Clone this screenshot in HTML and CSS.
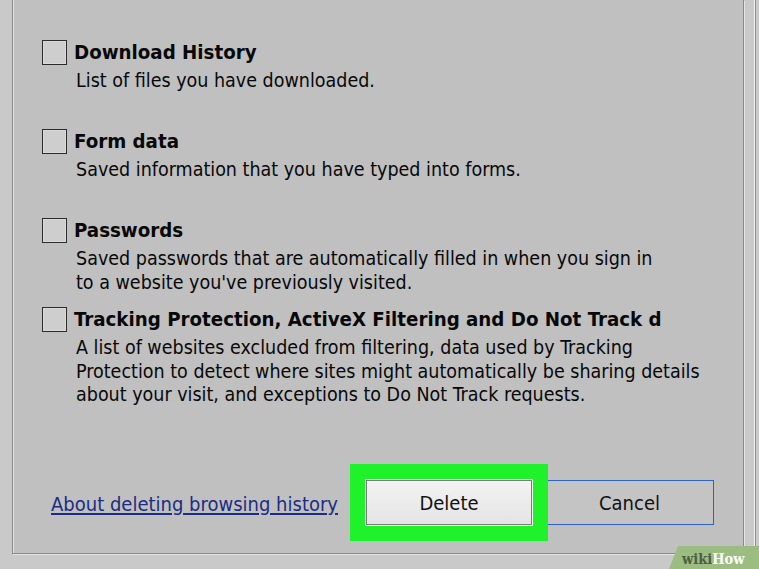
FILE: index.html
```html
<!DOCTYPE html>
<html lang="en">
<head>
<meta charset="utf-8">
<title>Delete Browsing History</title>
<link rel="stylesheet" href="styles.css">
</head>
<body>
<div class="window">
  <div class="frame">
    <div class="panel">
      <div class="options">
        <div class="option">
          <span class="check"></span>
          <div class="option-text">
            <div class="option-title">Download History</div>
            <div class="option-desc">List of files you have downloaded.</div>
          </div>
        </div>
        <div class="option">
          <span class="check"></span>
          <div class="option-text">
            <div class="option-title">Form data</div>
            <div class="option-desc">Saved information that you have typed into forms.</div>
          </div>
        </div>
        <div class="option">
          <span class="check"></span>
          <div class="option-text">
            <div class="option-title">Passwords</div>
            <div class="option-desc">Saved passwords that are automatically filled in when you sign in<br>to a website you've previously visited.</div>
          </div>
        </div>
        <div class="option">
          <span class="check"></span>
          <div class="option-text">
            <div class="option-title">Tracking Protection, ActiveX Filtering and Do Not Track d</div>
            <div class="option-desc">A list of websites excluded from filtering, data used by Tracking<br>Protection to detect where sites might automatically be sharing details<br>about your visit, and exceptions to Do Not Track requests.</div>
          </div>
        </div>
      </div>
      <div class="footer">
        <a class="help-link" href="#">About deleting browsing history</a>
        <div class="highlight"><button class="btn btn-delete" type="button">Delete</button></div>
        <button class="btn btn-cancel" type="button">Cancel</button>
      </div>
    </div>
  </div>
  <div class="watermark"><span class="wm-wiki">wiki</span><span class="wm-how">How</span></div>
</div>
</body>
</html>
```
FILE: styles.css
```css
* { box-sizing: border-box; }

body {
  margin: 0;
  width: 759px;
  height: 569px;
  overflow: hidden;
  font-family: "DejaVu Sans Condensed", "DejaVu Sans", sans-serif;
  font-stretch: condensed;
  font-size: 20px;
  color: #080808;
}

.window {
  position: relative;
  width: 759px;
  height: 569px;
  background: #c9c9c9;
  padding-right: 4px;
}

.frame {
  height: 100%;
  padding: 0 10px 15px 12px;
  background: #c9c9c9;
  border-right: 1px solid #f2f2f2;
  box-shadow: 1px 0 0 #8e8e8e;
}

.panel {
  height: 100%;
  display: flex;
  flex-direction: column;
  background: #c0c0c0;
  border: 1px solid #8a8a8a;
  border-top: none;
  box-shadow: inset 1px 0 0 #e4e4e4, 1px 1px 0 #e4e4e4;
  padding: 40px 29px 12px 29px;
}

.options {
  display: grid;
  grid-auto-rows: 89px;
}

.option {
  display: grid;
  grid-template-columns: 25px 1fr;
  column-gap: 7px;
  align-items: start;
}

.check {
  width: 25px;
  height: 25px;
  border: 1px solid #2c2c2c;
  background: #cecece;
  box-shadow: inset 0 0 0 1px #d9d9d9;
}

.option-title {
  font-weight: bold;
  font-size: 20.3px;
  line-height: 25px;
  white-space: nowrap;
}

.option-desc {
  margin-top: 4px;
  padding-left: 2px;
  font-size: 19.5px;
  line-height: 23.5px;
  white-space: nowrap;
}

.footer {
  margin-top: auto;
  display: flex;
  align-items: center;
  padding-left: 9px;
}

.help-link {
  margin-right: auto;
  margin-top: 3px;
  color: #1b2d84;
  text-decoration: underline;
  text-underline-offset: 2px;
}

.highlight {
  position: relative;
  z-index: 1;
  background: #1ff22b;
  padding: 16px;
}

.btn {
  height: 45px;
  margin: 0;
  padding: 0;
  font-family: inherit;
  font-stretch: condensed;
  font-size: 20px;
  color: #111;
}

.btn-delete {
  display: block;
  width: 166px;
  border: 1px solid #7b7b7b;
  box-shadow: 0 0 0 1px #f4f4f4;
  background: linear-gradient(#f3f3f3, #e4e4e4);
}

.btn-cancel {
  width: 169px;
  margin-left: -3px;
  border: 1px solid #2d62c8;
  background: #c4c4c4;
}

.watermark {
  position: absolute;
  right: 0;
  bottom: 0;
  width: 90px;
  height: 23px;
  padding-left: 13px;
  background: #9cbd82;
  clip-path: polygon(9px 0, 100% 0, 100% 100%, 0 100%);
  font-family: "DejaVu Serif", serif;
  font-weight: bold;
  font-size: 14.5px;
  line-height: 25px;
  white-space: nowrap;
}

.wm-wiki { color: #4e5e42; }
.wm-how { color: #fbfdf8; }
```
